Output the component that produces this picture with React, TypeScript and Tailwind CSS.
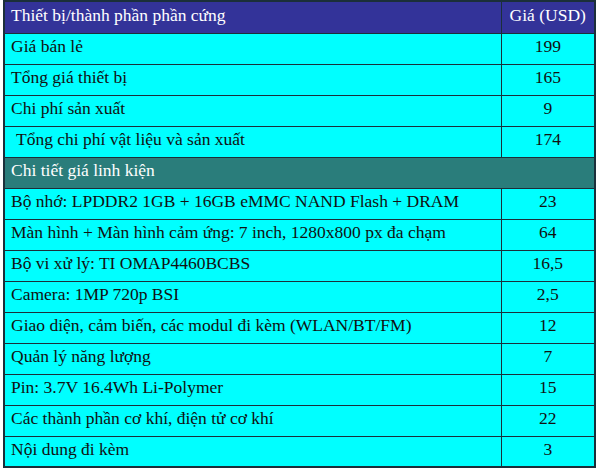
const rows: { label: string; price?: string; section?: boolean; indent?: boolean }[] = [
  { label: "Giá bán lẻ", price: "199" },
  { label: "Tổng giá thiết bị", price: "165" },
  { label: "Chi phí sản xuất", price: "9" },
  { label: "Tổng chi phí vật liệu và sản xuất", price: "174", indent: true },
  { label: "Chi tiết giá linh kiện", section: true },
  { label: "Bộ nhớ: LPDDR2 1GB + 16GB eMMC NAND Flash + DRAM", price: "23" },
  { label: "Màn hình + Màn hình cảm ứng: 7 inch, 1280x800 px đa chạm", price: "64" },
  { label: "Bộ vi xử lý: TI OMAP4460BCBS", price: "16,5" },
  { label: "Camera: 1MP 720p BSI", price: "2,5" },
  { label: "Giao diện, cảm biến, các modul đi kèm (WLAN/BT/FM)", price: "12" },
  { label: "Quản lý năng lượng", price: "7" },
  { label: "Pin: 3.7V 16.4Wh Li-Polymer", price: "15" },
  { label: "Các thành phần cơ khí, điện tử cơ khí", price: "22" },
  { label: "Nội dung đi kèm", price: "3" },
]

export default function App() {
  return (
    <div className="w-[600px] h-[469px] bg-white pl-[3px] pr-[4px] font-['Liberation_Serif',serif] text-[17.5px] leading-none">
      <table className="w-[593px] border-collapse border-[2px] border-[#1b2f3a]">
        <thead>
          <tr className="h-[32px] bg-[#333399] text-white">
            <th className="w-[497px] border border-[#1b2f3a] px-[6px] pb-[3px] text-left font-normal">Thiết bị/thành phần phần cứng</th>
            <th className="border border-[#1b2f3a] pb-[3px] text-center font-normal">Giá (USD)</th>
          </tr>
        </thead>
        <tbody>
          {rows.map((r) =>
            r.section ? (
              <tr key={r.label} className="h-[31px] bg-[#2a7d7b] text-white">
                <td colSpan={2} className="border border-[#1b2f3a] px-[6px] pb-[3px]">{r.label}</td>
              </tr>
            ) : (
              <tr key={r.label} className="h-[31px] bg-[#00ffff] text-[#111]">
                <td className={`border border-[#1b2f3a] pb-[3px] ${r.indent ? "pl-[11px]" : "pl-[6px]"} pr-[6px]`}>{r.label}</td>
                <td className="border border-[#1b2f3a] pb-[3px] text-center">{r.price}</td>
              </tr>
            ),
          )}
        </tbody>
      </table>
      <div className="mt-[1px] h-[2px] bg-[#bdbdbd]" />
    </div>
  )
}
